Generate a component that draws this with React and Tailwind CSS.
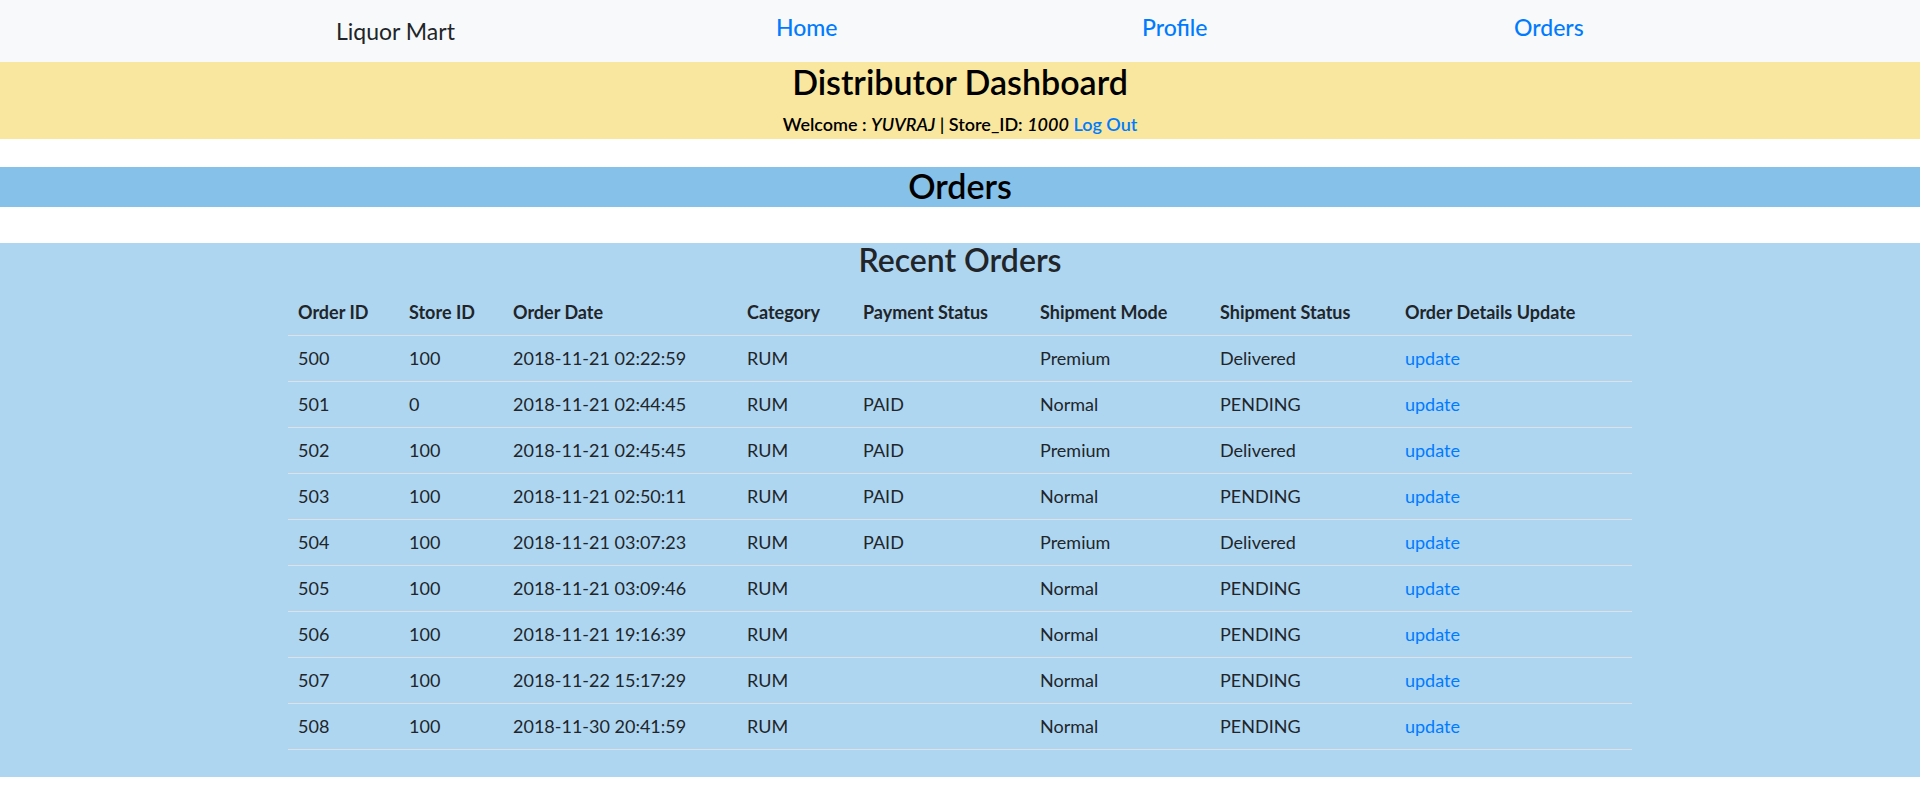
import React from "react";

const rows = [
  ["500", "100", "2018-11-21 02:22:59", "RUM", "", "Premium", "Delivered"],
  ["501", "0", "2018-11-21 02:44:45", "RUM", "PAID", "Normal", "PENDING"],
  ["502", "100", "2018-11-21 02:45:45", "RUM", "PAID", "Premium", "Delivered"],
  ["503", "100", "2018-11-21 02:50:11", "RUM", "PAID", "Normal", "PENDING"],
  ["504", "100", "2018-11-21 03:07:23", "RUM", "PAID", "Premium", "Delivered"],
  ["505", "100", "2018-11-21 03:09:46", "RUM", "", "Normal", "PENDING"],
  ["506", "100", "2018-11-21 19:16:39", "RUM", "", "Normal", "PENDING"],
  ["507", "100", "2018-11-22 15:17:29", "RUM", "", "Normal", "PENDING"],
  ["508", "100", "2018-11-30 20:41:59", "RUM", "", "Normal", "PENDING"],
];

const headers = [
  ["Order ID", "w-[111px]"],
  ["Store ID", "w-[104px]"],
  ["Order Date", "w-[234px]"],
  ["Category", "w-[116px]"],
  ["Payment Status", "w-[177px]"],
  ["Shipment Mode", "w-[180px]"],
  ["Shipment Status", "w-[185px]"],
  ["Order Details Update", "w-[237px]"],
];

export default function App() {
  return (
    <div className="min-h-[789px] bg-white font-['Lato','Liberation_Sans',sans-serif] text-[#212529]">
      <nav className="flex h-[62px] items-start bg-[#f8f9fa]">
        <div className="ml-[336px] mt-[16px] w-[440px] text-[23px] leading-[30px] text-[#212529]">
          Liquor Mart
        </div>
        <a className="mt-[12px] w-[366px] text-[23px] font-medium leading-[30px] text-[#007bff]">Home</a>
        <a className="mt-[12px] w-[372px] text-[23px] font-medium leading-[30px] text-[#007bff]">Profile</a>
        <a className="mt-[12px] text-[23px] font-medium leading-[30px] text-[#007bff]">Orders</a>
      </nav>

      <header className="flex h-[77px] flex-col items-center bg-[#f9e79f] pt-[1px] text-black">
        <h1 className="text-[34px] font-semibold leading-[38px]">Distributor Dashboard</h1>
        <div className="mt-[10px] text-[18px] font-semibold leading-[27px]">
          Welcome : <i>YUVRAJ</i> | Store_ID: <i>1000</i>{" "}
          <a className="text-[#007bff]">Log Out</a>
        </div>
      </header>

      <div className="h-[28px]" />

      <div className="flex h-[40px] items-start justify-center bg-[#85c1e9]">
        <h2 className="text-[34px] font-semibold leading-[38px] text-black">Orders</h2>
      </div>

      <div className="h-[36px]" />

      <section className="flex flex-col items-center bg-[#aed6f1] pb-[27px] pt-[1px]">
        <h3 className="text-[32px] font-semibold leading-[32px] text-[#212529]">Recent Orders</h3>
        <table className="mt-[14px] w-[1344px] table-fixed border-collapse text-left">
          <thead>
            <tr className="border-b border-[#dee2e6]">
              {headers.map(([h, w]) => (
                <th key={h} className={`${w} px-[10px] py-[10px] text-[18px] font-bold leading-[25px]`}>
                  {h}
                </th>
              ))}
            </tr>
          </thead>
          <tbody>
            {rows.map((r) => (
              <tr key={r[0]} className="border-b border-[#dee2e6]">
                {r.map((c, i) => (
                  <td key={i} className="px-[10px] py-[10px] text-[18px] leading-[25px]">
                    {c}
                  </td>
                ))}
                <td className="px-[10px] py-[10px] text-[18px] leading-[25px]">
                  <a className="text-[#007bff]">update</a>
                </td>
              </tr>
            ))}
          </tbody>
        </table>
      </section>
    </div>
  );
}
